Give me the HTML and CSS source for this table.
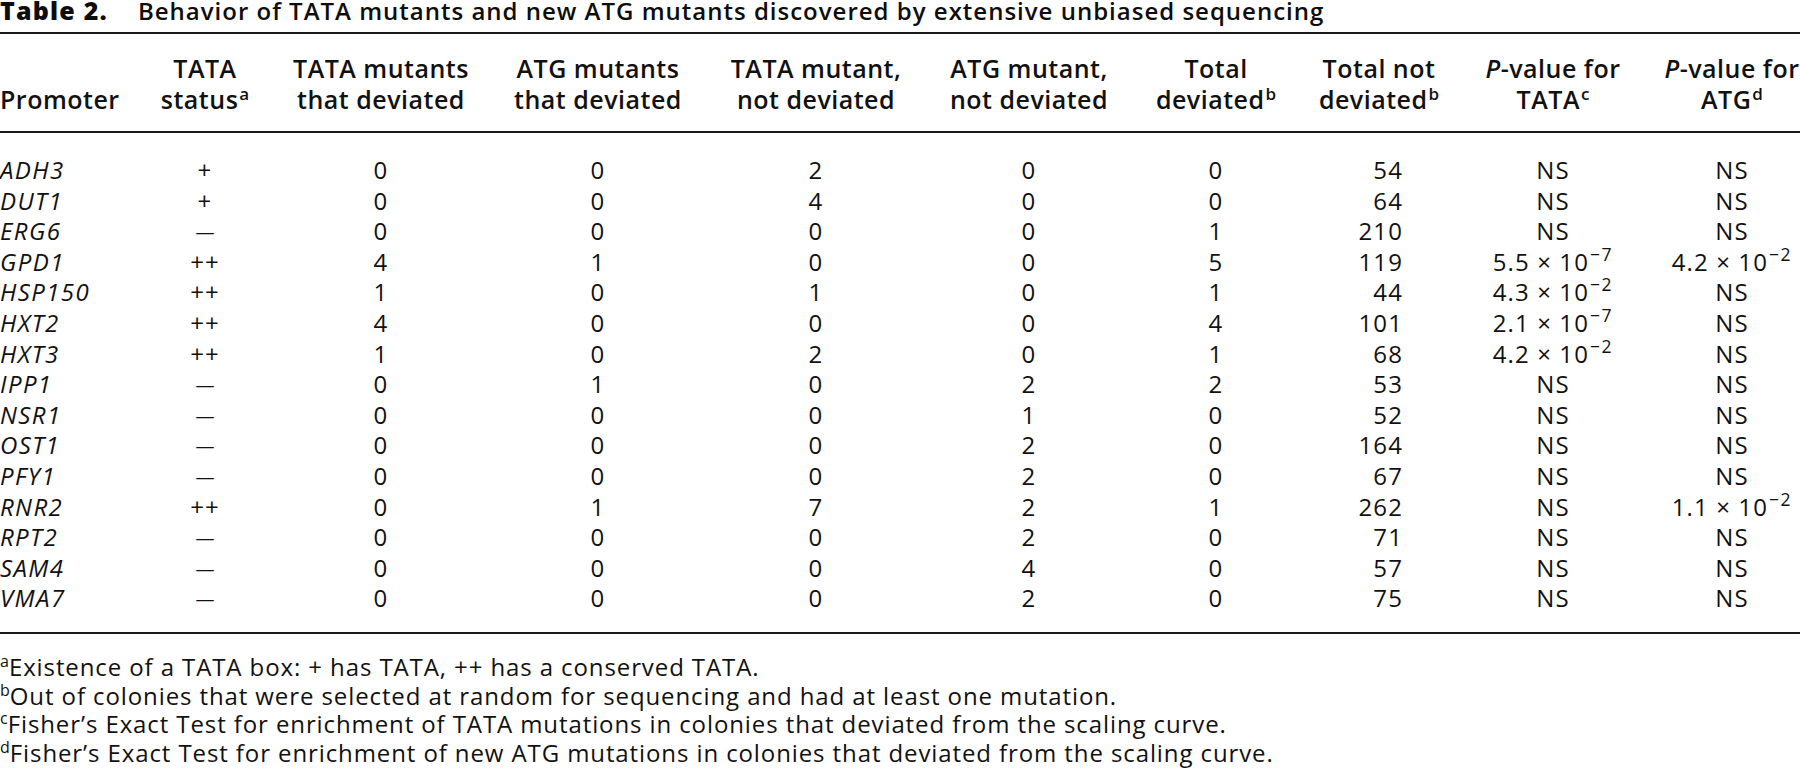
FILE: index.html
```html
<!DOCTYPE html>
<html lang="en">
<head>
<meta charset="utf-8">
<title>Table 2</title>
<link rel="stylesheet" href="styles.css">
</head>
<body>
<div class="page">
  <div class="caption"><span class="caption-label">Table 2.</span><span class="caption-text">Behavior of TATA mutants and new ATG mutants discovered by extensive unbiased sequencing</span></div>
  <div class="table-wrap">
    <table class="data-table">
      <colgroup>
        <col class="col-promoter">
        <col class="col-status">
        <col class="col-tata-dev">
        <col class="col-atg-dev">
        <col class="col-tata-not">
        <col class="col-atg-not">
        <col class="col-total-dev">
        <col class="col-total-not">
        <col class="col-p-tata">
        <col class="col-p-atg">
      </colgroup>
      <thead>
        <tr>
          <th class="h-left">Promoter</th>
          <th>TATA<br>status<sup class="fn">a</sup></th>
          <th>TATA mutants<br>that deviated</th>
          <th>ATG mutants<br>that deviated</th>
          <th>TATA mutant,<br>not deviated</th>
          <th>ATG mutant,<br>not deviated</th>
          <th>Total<br>deviated<sup class="fn">b</sup></th>
          <th>Total not<br>deviated<sup class="fn">b</sup></th>
          <th><i>P</i>-value for<br>TATA<sup class="fn">c</sup></th>
          <th><i>P</i>-value for<br>ATG<sup class="fn">d</sup></th>
        </tr>
      </thead>
      <tbody>
        <tr><td class="gene">ADH3</td><td>+</td><td>0</td><td>0</td><td>2</td><td>0</td><td>0</td><td class="num">54</td><td>NS</td><td>NS</td></tr>
        <tr><td class="gene">DUT1</td><td>+</td><td>0</td><td>0</td><td>4</td><td>0</td><td>0</td><td class="num">64</td><td>NS</td><td>NS</td></tr>
        <tr><td class="gene">ERG6</td><td><span class="dash">—</span></td><td>0</td><td>0</td><td>0</td><td>0</td><td>1</td><td class="num">210</td><td>NS</td><td>NS</td></tr>
        <tr><td class="gene">GPD1</td><td>++</td><td>4</td><td>1</td><td>0</td><td>0</td><td>5</td><td class="num">119</td><td>5.5 × 10<sup class="exp">−7</sup></td><td>4.2 × 10<sup class="exp">−2</sup></td></tr>
        <tr><td class="gene">HSP150</td><td>++</td><td>1</td><td>0</td><td>1</td><td>0</td><td>1</td><td class="num">44</td><td>4.3 × 10<sup class="exp">−2</sup></td><td>NS</td></tr>
        <tr><td class="gene">HXT2</td><td>++</td><td>4</td><td>0</td><td>0</td><td>0</td><td>4</td><td class="num">101</td><td>2.1 × 10<sup class="exp">−7</sup></td><td>NS</td></tr>
        <tr><td class="gene">HXT3</td><td>++</td><td>1</td><td>0</td><td>2</td><td>0</td><td>1</td><td class="num">68</td><td>4.2 × 10<sup class="exp">−2</sup></td><td>NS</td></tr>
        <tr><td class="gene">IPP1</td><td><span class="dash">—</span></td><td>0</td><td>1</td><td>0</td><td>2</td><td>2</td><td class="num">53</td><td>NS</td><td>NS</td></tr>
        <tr><td class="gene">NSR1</td><td><span class="dash">—</span></td><td>0</td><td>0</td><td>0</td><td>1</td><td>0</td><td class="num">52</td><td>NS</td><td>NS</td></tr>
        <tr><td class="gene">OST1</td><td><span class="dash">—</span></td><td>0</td><td>0</td><td>0</td><td>2</td><td>0</td><td class="num">164</td><td>NS</td><td>NS</td></tr>
        <tr><td class="gene">PFY1</td><td><span class="dash">—</span></td><td>0</td><td>0</td><td>0</td><td>2</td><td>0</td><td class="num">67</td><td>NS</td><td>NS</td></tr>
        <tr><td class="gene">RNR2</td><td>++</td><td>0</td><td>1</td><td>7</td><td>2</td><td>1</td><td class="num">262</td><td>NS</td><td>1.1 × 10<sup class="exp">−2</sup></td></tr>
        <tr><td class="gene">RPT2</td><td><span class="dash">—</span></td><td>0</td><td>0</td><td>0</td><td>2</td><td>0</td><td class="num">71</td><td>NS</td><td>NS</td></tr>
        <tr><td class="gene">SAM4</td><td><span class="dash">—</span></td><td>0</td><td>0</td><td>0</td><td>4</td><td>0</td><td class="num">57</td><td>NS</td><td>NS</td></tr>
        <tr><td class="gene">VMA7</td><td><span class="dash">—</span></td><td>0</td><td>0</td><td>0</td><td>2</td><td>0</td><td class="num">75</td><td>NS</td><td>NS</td></tr>
      </tbody>
    </table>
  </div>
  <div class="notes">
    <p class="note"><sup class="fn-note">a</sup>Existence of a TATA box: + has TATA, ++ has a conserved TATA.</p>
    <p class="note"><sup class="fn-note">b</sup>Out of colonies that were selected at random for sequencing and had at least one mutation.</p>
    <p class="note"><sup class="fn-note">c</sup>Fisher’s Exact Test for enrichment of TATA mutations in colonies that deviated from the scaling curve.</p>
    <p class="note"><sup class="fn-note">d</sup>Fisher’s Exact Test for enrichment of new ATG mutations in colonies that deviated from the scaling curve.</p>
  </div>
</div>
</body>
</html>
```

FILE: styles.css
```css
* {
  box-sizing: border-box;
}

html,
body {
  margin: 0;
  padding: 0;
  background: #ffffff;
}

body {
  font-family: "Open Sans", "Noto Sans", "DejaVu Sans", sans-serif;
  color: #111111;
}

.page {
  width: 1800px;
  height: 777px;
  overflow: hidden;
}

/* Caption */
.caption {
  height: 32px;
  padding-top: 1px;
  font-size: 24px;
  line-height: 18px;
  letter-spacing: 1px;
  white-space: nowrap;
  color: #0d0d0d;
}

.caption-label {
  font-size: 25px;
  font-weight: 800;
  letter-spacing: 1.2px;
  margin-right: 30px;
}

.caption-text {
  font-weight: 600;
}

/* Table */
.table-wrap {
  width: 1800px;
  overflow: hidden;
}

.data-table {
  border-collapse: separate;
  border-spacing: 0;
  table-layout: fixed;
  width: 1814px;
}

.col-promoter { width: 140px; }
.col-status { width: 130px; }
.col-tata-dev { width: 222px; }
.col-atg-dev { width: 212px; }
.col-tata-not { width: 224px; }
.col-atg-not { width: 202px; }
.col-total-dev { width: 172px; }
.col-total-not { width: 154px; }
.col-p-tata { width: 194px; }
.col-p-atg { width: 164px; }

.data-table th {
  font-size: 25px;
  font-weight: 600;
  line-height: 31px;
  letter-spacing: 0.5px;
  text-align: center;
  vertical-align: bottom;
  white-space: nowrap;
  padding: 19px 0 16px;
  border-top: 2px solid #1a1a1a;
  border-bottom: 2px solid #1a1a1a;
}

.data-table th.h-left {
  text-align: left;
}

.data-table td {
  font-size: 24px;
  font-weight: 400;
  line-height: 30.6px;
  letter-spacing: 1.1px;
  text-align: center;
  white-space: nowrap;
  padding: 0;
}

.data-table td.gene {
  font-style: italic;
  text-align: left;
  letter-spacing: 1.4px;
}

.data-table td.num {
  text-align: right;
  padding-right: 53px;
}

.data-table tbody tr:first-child td {
  padding-top: 22px;
}

.data-table tbody tr:last-child td {
  padding-bottom: 18px;
  border-bottom: 2px solid #1a1a1a;
}

.dash {
  font-size: 19px;
  line-height: 0;
  letter-spacing: 0;
  vertical-align: 1px;
}

.fn {
  font-size: 17px;
  font-weight: 600;
  line-height: 0;
  vertical-align: 9px;
  letter-spacing: 0;
  margin-left: 1px;
}

.exp {
  font-size: 17.5px;
  line-height: 0;
  vertical-align: 10px;
  letter-spacing: 1.6px;
  margin-left: 1px;
}

/* Footnotes */
.notes {
  padding-top: 19px;
}

.note {
  margin: 0;
  font-size: 24px;
  line-height: 28.7px;
  letter-spacing: 0.9px;
  white-space: nowrap;
}

.fn-note {
  font-size: 16px;
  line-height: 0;
  vertical-align: 9px;
  letter-spacing: 0;
}
```
